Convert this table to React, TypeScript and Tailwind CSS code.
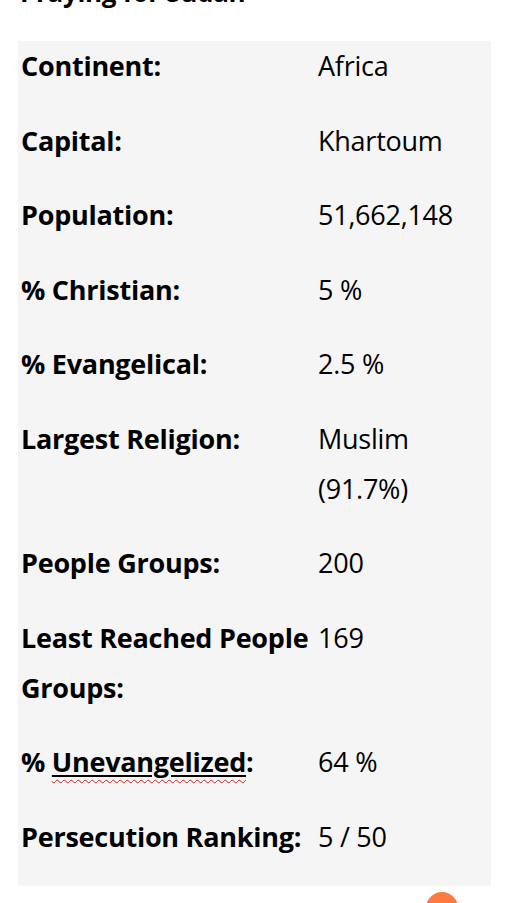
import React from "react";

const rows: { label: React.ReactNode; value: React.ReactNode }[] = [
  { label: "Continent:", value: "Africa" },
  { label: "Capital:", value: "Khartoum" },
  { label: "Population:", value: "51,662,148" },
  { label: "% Christian:", value: "5 %" },
  { label: "% Evangelical:", value: "2.5 %" },
  { label: "Largest Religion:", value: "Muslim (91.7%)" },
  { label: "People Groups:", value: "200" },
  { label: "Least Reached People Groups:", value: "169" },
  {
    label: (
      <>
        %{" "}
        <span className="underline decoration-wavy decoration-[#d02020] decoration-1 underline-offset-[7px]">
          <span className="underline decoration-black decoration-[1.5px] underline-offset-[3px]">Unevangelized</span>
        </span>
        :
      </>
    ),
    value: "64 %",
  },
  { label: "Persecution Ranking:", value: "5 / 50" },
];

export default function App() {
  return (
    <div
      className="relative w-[529px] h-[903px] overflow-hidden bg-white text-black"
      style={{ fontFamily: "'Open Sans', Lato, sans-serif" }}
    >
      <div className="pl-[20px] -mt-[23px] text-[26px] leading-[30px] font-bold tracking-[-0.3px]">Praying for Sudan</div>
      <div className="ml-[18px] mt-[34px] w-[473px] bg-[#f5f5f5] pl-[3px] pr-[4px]">
        {rows.map((r, i) => (
          <div key={i} className="grid grid-cols-[297px_1fr] pb-[24.5px] text-[27px] leading-[50px] tracking-[-0.25px]">
            <div className="font-bold">{r.label}</div>
            <div className="w-[150px]">{r.value}</div>
          </div>
        ))}
      </div>
      <div className="absolute left-[426px] top-[892px] w-[32px] h-[32px] rounded-full bg-[#ff7a3d]" />
    </div>
  );
}
